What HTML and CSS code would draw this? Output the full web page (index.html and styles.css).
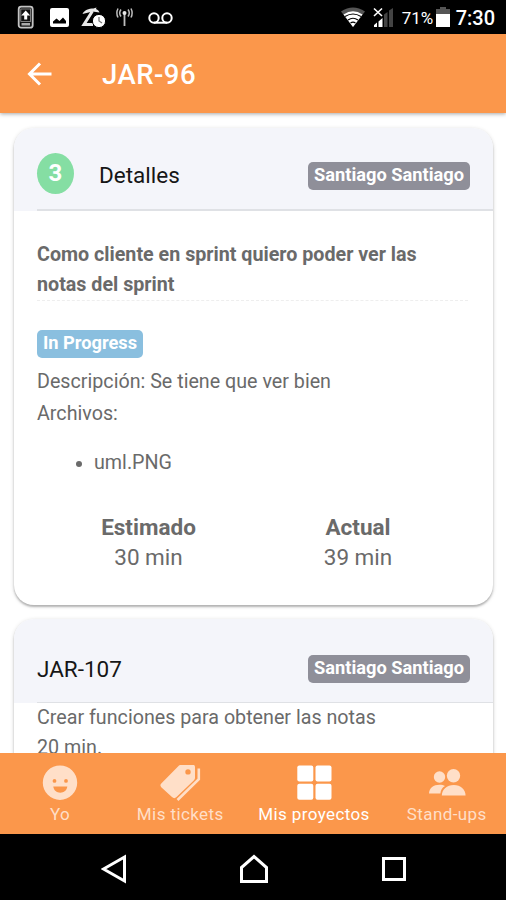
FILE: index.html
```html
<!doctype html>
<html lang="es">
  <head>
    <meta charset="UTF-8" />
    <meta name="viewport" content="width=device-width, initial-scale=1" />
    <title>JAR-96</title>
    <link rel="stylesheet" href="styles.css">
  </head>
  <body>
    <div class="app">
      <div class="status-bar">
        <svg class="status-bar__icons" width="160" height="34" viewBox="0 0 160 34" fill="#e8e8e8">
          <!-- phone update -->
          <rect x="1.700" y="6.700" width="14" height="21" rx="2.500" fill="#111" stroke="#c4c4c4" stroke-width="1.800" />
          <rect x="3.800" y="9" width="9.800" height="12.500" fill="#111" stroke="#999" stroke-width=".8" />
          <path d="M8.700 10.500l-4.500 5h3v4h3v-4h3z" fill="#fff" />
          <path d="M4.500 23h8.500v2.500H4.500z" fill="#aaa" />
          <!-- picture -->
          <rect x="33" y="8" width="19" height="19" rx="2" fill="#fff" />
          <path d="M36 23.500v-2l3.500-3 3 2.500 3.500-3.500 3 3.500v2.500z" fill="#000" />
          <!-- beach umbrella and clock -->
          <path d="M65.500 14c2-4 6-5.500 11-5.500l3-1-.5 1.500c2 1 3 2 3.500 3.500l-7-1z" />
          <path d="M75.500 11l-8.500 13.500h9" fill="none" stroke="#e8e8e8" stroke-width="3" />
          <circle cx="82" cy="21" r="6.600" fill="#fff" stroke="#000" stroke-width="1" />
          <path d="M82 17v4l3 2" fill="none" stroke="#777" stroke-width="1.300" />
          <!-- antenna -->
          <g fill="none" stroke="#bdbdbd" stroke-width="1.500">
            <path d="M107.500 14v12" stroke-width="1.800" />
            <path d="M104 9.500c-1.500 2-1.500 5 0 7M111 9.500c1.500 2 1.500 5 0 7M101 8.500c-1.500 3-1.500 6 0 9M114 8.500c1.500 3 1.500 6 0 9" />
          </g>
          <circle cx="107.500" cy="13" r="2" />
          <!-- voicemail -->
          <g fill="none" stroke="#fff" stroke-width="2">
            <circle cx="137" cy="18" r="4.700" />
            <circle cx="150" cy="18" r="4.700" />
            <path d="M137 22.700h13" />
          </g>
        </svg>
        <div class="status-bar__right">
          <svg width="54" height="34" viewBox="0 0 54 34">
            <path d="M0 11.500q12-8 24 0L12 27z" fill="#555" />
            <path d="M2.500 14.500q9.500-6.500 19 0L12 27z" fill="#fff" />
            <path d="M4 16.500q8-5 16 0M7 20q5-3.500 10 0M9.500 23q2.500-1.800 5 0" fill="none" stroke="#000" stroke-width="1.100" />
            <path d="M33 8.500l8 7.500M41 8.500l-8 7.500" stroke="#fff" stroke-width="1.600" />
            <path d="M33 25l3-2.500V27h-3zM37.500 21.500l4-3.500v9h-4z" fill="#fff" />
            <path d="M43 14.500l3.500-2.500v15H43zM48 10.500l4-2.500v19h-4z" fill="#444" />
          </svg>
          <span class="status-bar__percent">71%</span>
          <svg width="14" height="34" viewBox="0 0 14 34">
            <path d="M0 9h4V7h6v2h4v5H0z" fill="#555" />
            <path d="M0 14h14v13H0z" fill="#fff" />
          </svg>
          <span class="status-bar__time">7:30</span>
        </div>
      </div>

      <header class="toolbar">
        <svg width="26" height="24" viewBox="0 0 26 24" fill="none" stroke="#fff" stroke-width="3">
          <path d="M13 1.500L2.500 12 13 22.500M3 12h21.500" />
        </svg>
        <h1 class="toolbar__title">JAR-96</h1>
      </header>

      <main class="content">
        <section class="card">
          <div class="card__header">
            <span class="points">3</span>
            <h2 class="card__title">Detalles</h2>
            <span class="badge">Santiago Santiago</span>
          </div>
          <div class="card__body">
            <p class="summary">Como cliente en sprint quiero poder ver las notas del sprint</p>
            <span class="badge badge--progress">In Progress</span>
            <p class="text">Descripción: Se tiene que ver bien</p>
            <p class="text">Archivos:</p>
            <ul class="files">
              <li>uml.PNG</li>
            </ul>
            <div class="times">
              <div><b>Estimado</b><br>30 min</div>
              <div><b>Actual</b><br>39 min</div>
            </div>
          </div>
        </section>

        <section class="card card--task">
          <div class="card__header">
            <h2 class="card__title">JAR-107</h2>
            <span class="badge">Santiago Santiago</span>
          </div>
          <div class="card__body">
            <p class="task-text">Crear funciones para obtener las notas</p>
            <p class="task-text">20 min.</p>
          </div>
        </section>
      </main>

      <nav class="tabs">
        <a class="tab">
          <svg width="40" height="36" viewBox="0 0 40 36" fill="currentColor">
            <path fill-rule="evenodd" d="M20 .500a17.200 17.200 0 1 0 0 34.400 17.200 17.200 0 0 0 0-34.400zM14.500 14a1.900 1.900 0 1 1 0 3.800 1.900 1.900 0 0 1 0-3.800zM26 14a1.900 1.900 0 1 1 0 3.800 1.900 1.900 0 0 1 0-3.800zM13.300 21.500h14c-.3 3.800-3.500 6.200-7 6.200s-6.700-2.400-7-6.200z" />
          </svg>
          Yo
        </a>
        <a class="tab">
          <svg width="42" height="36" viewBox="0 0 42 36" fill="currentColor">
            <path fill-rule="evenodd" d="M20 .5l2-1h11c2 0 3 1 3 2.500v10.500c0 1.500-.5 2.300-1.500 3.300L17.500 32c-1.500 1.500-3 1.500-4.500 0l-10.500-9.500c-1.500-1.500-1.500-2.800 0-4.200zM29 4.200a2.700 2.700 0 1 0 0 5.400 2.700 2.700 0 0 0 0-5.400z" />
            <path d="M39.800 3.500v10.800L18.500 35" fill="none" stroke="currentColor" stroke-width="2.600" />
          </svg>
          Mis tickets
        </a>
        <a class="tab tab--active">
          <svg width="35" height="36" viewBox="0 0 35 36" fill="currentColor">
            <rect x=".3" y=".5" width="16" height="16" rx="2" />
            <rect x="18.500" y=".5" width="16" height="16" rx="2" />
            <rect x=".3" y="18.700" width="16" height="16" rx="2" />
            <rect x="18.500" y="18.700" width="16" height="16" rx="2" />
          </svg>
          Mis proyectos
        </a>
        <a class="tab">
          <svg width="38" height="36" viewBox="0 0 38 36" fill="currentColor">
            <circle cx="11.500" cy="12" r="5.700" />
            <path d="M1 28.500c.3-5.500 4.500-8.700 10.500-8.700 2.300 0 4.100.4 5.500 1.200-2.800 1.600-4.200 4-4.600 7.500z" />
            <circle cx="25.500" cy="10.800" r="6.700" />
            <path d="M13.800 30.500c.2-6.300 5-10.500 12-10.500s11.500 4.200 11.800 10.500z" />
          </svg>
          Stand-ups
        </a>
      </nav>

      <div class="nav-bar">
        <svg width="26" height="30" viewBox="0 0 26 30"><path d="M23.500 3v24L2.500 15z" /></svg>
        <svg width="30" height="30" viewBox="0 0 30 30"><path d="M2.500 27.500v-14L15 2.500l12.500 11v14z" /></svg>
        <svg width="26" height="30" viewBox="0 0 26 30"><path d="M2.500 4.500h21v21h-21z" /></svg>
      </div>
    </div>
  </body>
</html>
```
FILE: styles.css
```css
* {
  box-sizing: border-box;
}

body {
  margin: 0;
  font-family: Roboto, sans-serif;
  color: #6a6a6a;
  background-color: #fff;
}

h1,
h2,
p {
  margin: 0;
}

svg {
  display: block;
  flex-shrink: 0;
}

.app {
  display: grid;
  grid-template-rows: 34px 79px 640px 81px 66px;
  height: 900px;
  overflow: hidden;
}

.status-bar {
  display: flex;
  justify-content: space-between;
  padding: 0 11px 0 17px;
  color: #fff;
  background-color: #000;
}

.status-bar__right {
  display: flex;
  align-items: center;
}

.status-bar__percent {
  width: 32px;
  margin: 1px 2px 0 7px;
  font-size: 17px;
  white-space: nowrap;
}

.status-bar__time {
  margin: 2px 0 0 6px;
  font-size: 20px;
  font-weight: 500;
}

.toolbar {
  z-index: 1;
  display: flex;
  align-items: center;
  gap: 49px;
  padding-left: 27px;
  color: #fff;
  background-color: #fb974b;
  box-shadow: 0 1px 4px rgba(0, 0, 0, 0.35);
}

.toolbar__title {
  padding-top: 1px;
  font-size: 27.500px;
  font-weight: 500;
  letter-spacing: 0.5px;
}

.content {
  display: grid;
  grid-template-rows: 477px 477px;
  gap: 14px;
  padding: 15px 13px 0 14px;
  overflow: hidden;
}

.card {
  border-radius: 20px;
  background-color: #fff;
  box-shadow: 0 2px 2px rgba(0, 0, 0, 0.22), 0 1px 4px rgba(0, 0, 0, 0.16);
  overflow: hidden;
}

.card__header {
  display: flex;
  align-items: center;
  height: 83px;
  padding: 12px 23px 0;
  background: linear-gradient(#dfe1e5, #dfe1e5) 23px 100% / 100% 2px no-repeat #f4f5fa;
}

.card__title {
  margin-bottom: 2px;
  font-size: 22.500px;
  font-weight: 400;
  color: #161616;
}

.card__body {
  padding: 29px 25px 0 23px;
}

.points {
  width: 37px;
  height: 41px;
  margin: -4px 25px 0 0;
  border-radius: 50%;
  font-size: 24px;
  font-weight: 700;
  line-height: 41px;
  text-align: center;
  color: #fff;
  background-color: #85dea3;
}

.badge {
  display: block;
  width: max-content;
  height: 28px;
  margin-left: auto;
  padding: 0 6px;
  border-radius: 5px;
  font-size: 18.250px;
  font-weight: 700;
  line-height: 26px;
  color: #fff;
  background-color: #8f8f99;
}

.badge--progress {
  margin: 29px 0 8px;
  background-color: #8abfdf;
}

.summary {
  padding-bottom: 1px;
  border-bottom: 1px dashed #eee;
  font-size: 19.700px;
  font-weight: 700;
  line-height: 29.500px;
}

.text {
  font-size: 19.700px;
  line-height: 32px;
}

.files {
  margin: 18px 0 0;
  padding-left: 57px;
  font-size: 19.700px;
  line-height: 30px;
}

.files li::marker {
  font-size: 18px;
}

.times {
  display: grid;
  grid-template-columns: 209px 210px;
  margin: 34px 0 0 7px;
  font-size: 22.500px;
  line-height: 30px;
  text-align: center;
}

.card--task .card__header {
  height: 84px;
  padding-top: 18px;
  background-size: 100% 1px;
}

.card--task .badge {
  margin-bottom: 2px;
}

.card--task .card__body {
  padding-top: 0;
}

.task-text {
  font-size: 19.700px;
  line-height: 29.500px;
}

.tabs {
  z-index: 1;
  display: grid;
  grid-template-columns: 120px 120.500px 147px 118.500px;
  background-color: #fb974b;
}

.tab {
  display: flex;
  flex-direction: column;
  align-items: center;
  justify-content: space-between;
  padding: 12px 0 10px;
  font-size: 17px;
  line-height: 20px;
  letter-spacing: 0.4px;
  white-space: nowrap;
  color: #ffdfc8;
}

.tab--active {
  color: #fff;
}

.nav-bar {
  z-index: 1;
  display: grid;
  grid-template-columns: 140px 140px 140px;
  justify-content: center;
  align-content: center;
  justify-items: center;
  padding: 4px 0 0 1px;
  background-color: #000;
}

.nav-bar path {
  fill: none;
  stroke: #fff;
  stroke-width: 3;
}
```
